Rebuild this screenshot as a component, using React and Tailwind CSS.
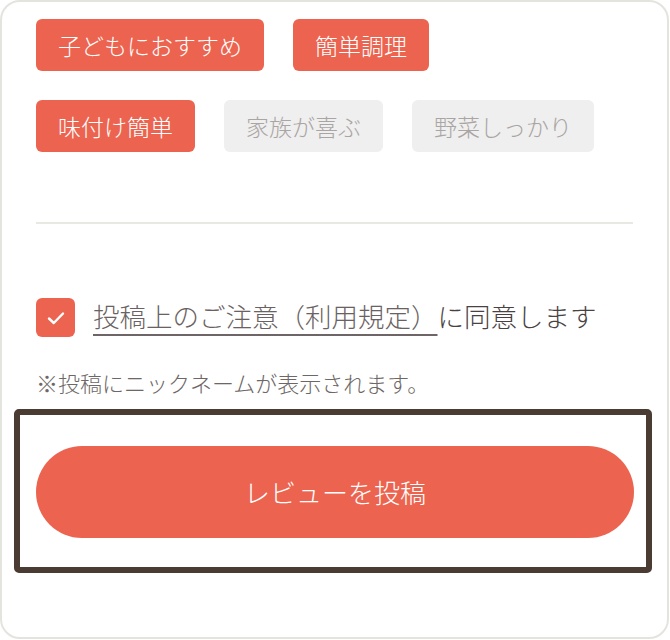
export default function App() {
  const font = { fontFamily: '"Noto Sans CJK JP", "Noto Sans", sans-serif' };
  const Tag = ({ label, active }) => (
    <div
      className={
        active
          ? "h-[52px] px-[22px] rounded-[6px] bg-[#ec6450] text-white text-[23px] leading-none flex items-center"
          : "h-[52px] px-[22px] rounded-[6px] bg-[#efefef] text-[#aaa5a3] text-[23px] leading-none flex items-center"
      }
    >
      {label}
    </div>
  );
  return (
    <div className="w-[670px] h-[640px] bg-white font-light" style={font}>
      <div className="w-[669px] h-[639px] border-2 border-[#e4e4df] rounded-[20px] pt-[17px] px-[34px] overflow-hidden">
        <div className="flex flex-col gap-[29px]">
          <div className="flex gap-[29px]">
            <Tag label="子どもにおすすめ" active />
            <Tag label="簡単調理" active />
          </div>
          <div className="flex gap-[29px]">
            <Tag label="味付け簡単" active />
            <Tag label="家族が喜ぶ" />
            <Tag label="野菜しっかり" />
          </div>
        </div>
        <div className="mt-[70px] h-[2px] bg-[#e9e9e4]" />
        <div className="mt-[74px] flex items-center gap-[18px]">
          <div className="w-[39px] h-[39px] rounded-[6px] bg-[#ec6450] flex items-center justify-center">
            <svg width="18" height="14" viewBox="0 0 18 14" fill="none">
              <path d="M2 7.5L6.8 12L16 2.5" stroke="white" strokeWidth="2.4" strokeLinecap="round" strokeLinejoin="round" />
            </svg>
          </div>
          <div className="text-[26.5px] leading-[39px] -mt-[5px] text-[#4a4242] whitespace-nowrap">
            <span className="underline decoration-[1.5px] underline-offset-[7px] decoration-[#6e6666] text-[#6a6262]">投稿上のご注意（利用規定）</span>
            に同意します
          </div>
        </div>
        <div className="mt-[29px] text-[22px] leading-[32px] text-[#6e6766] whitespace-nowrap">
          ※投稿にニックネームが表示されます。
        </div>
        <div className="mt-[11px] -ml-[22px] w-[638px] h-[164px] border-[6px] border-[#4a3b33] rounded-[5px] pt-[31px] pl-[16px]">
          <button className="w-[598px] h-[92px] rounded-full bg-[#ec6450] text-white text-[26px] leading-none flex items-center justify-center">
            レビューを投稿
          </button>
        </div>
      </div>
    </div>
  );
}
